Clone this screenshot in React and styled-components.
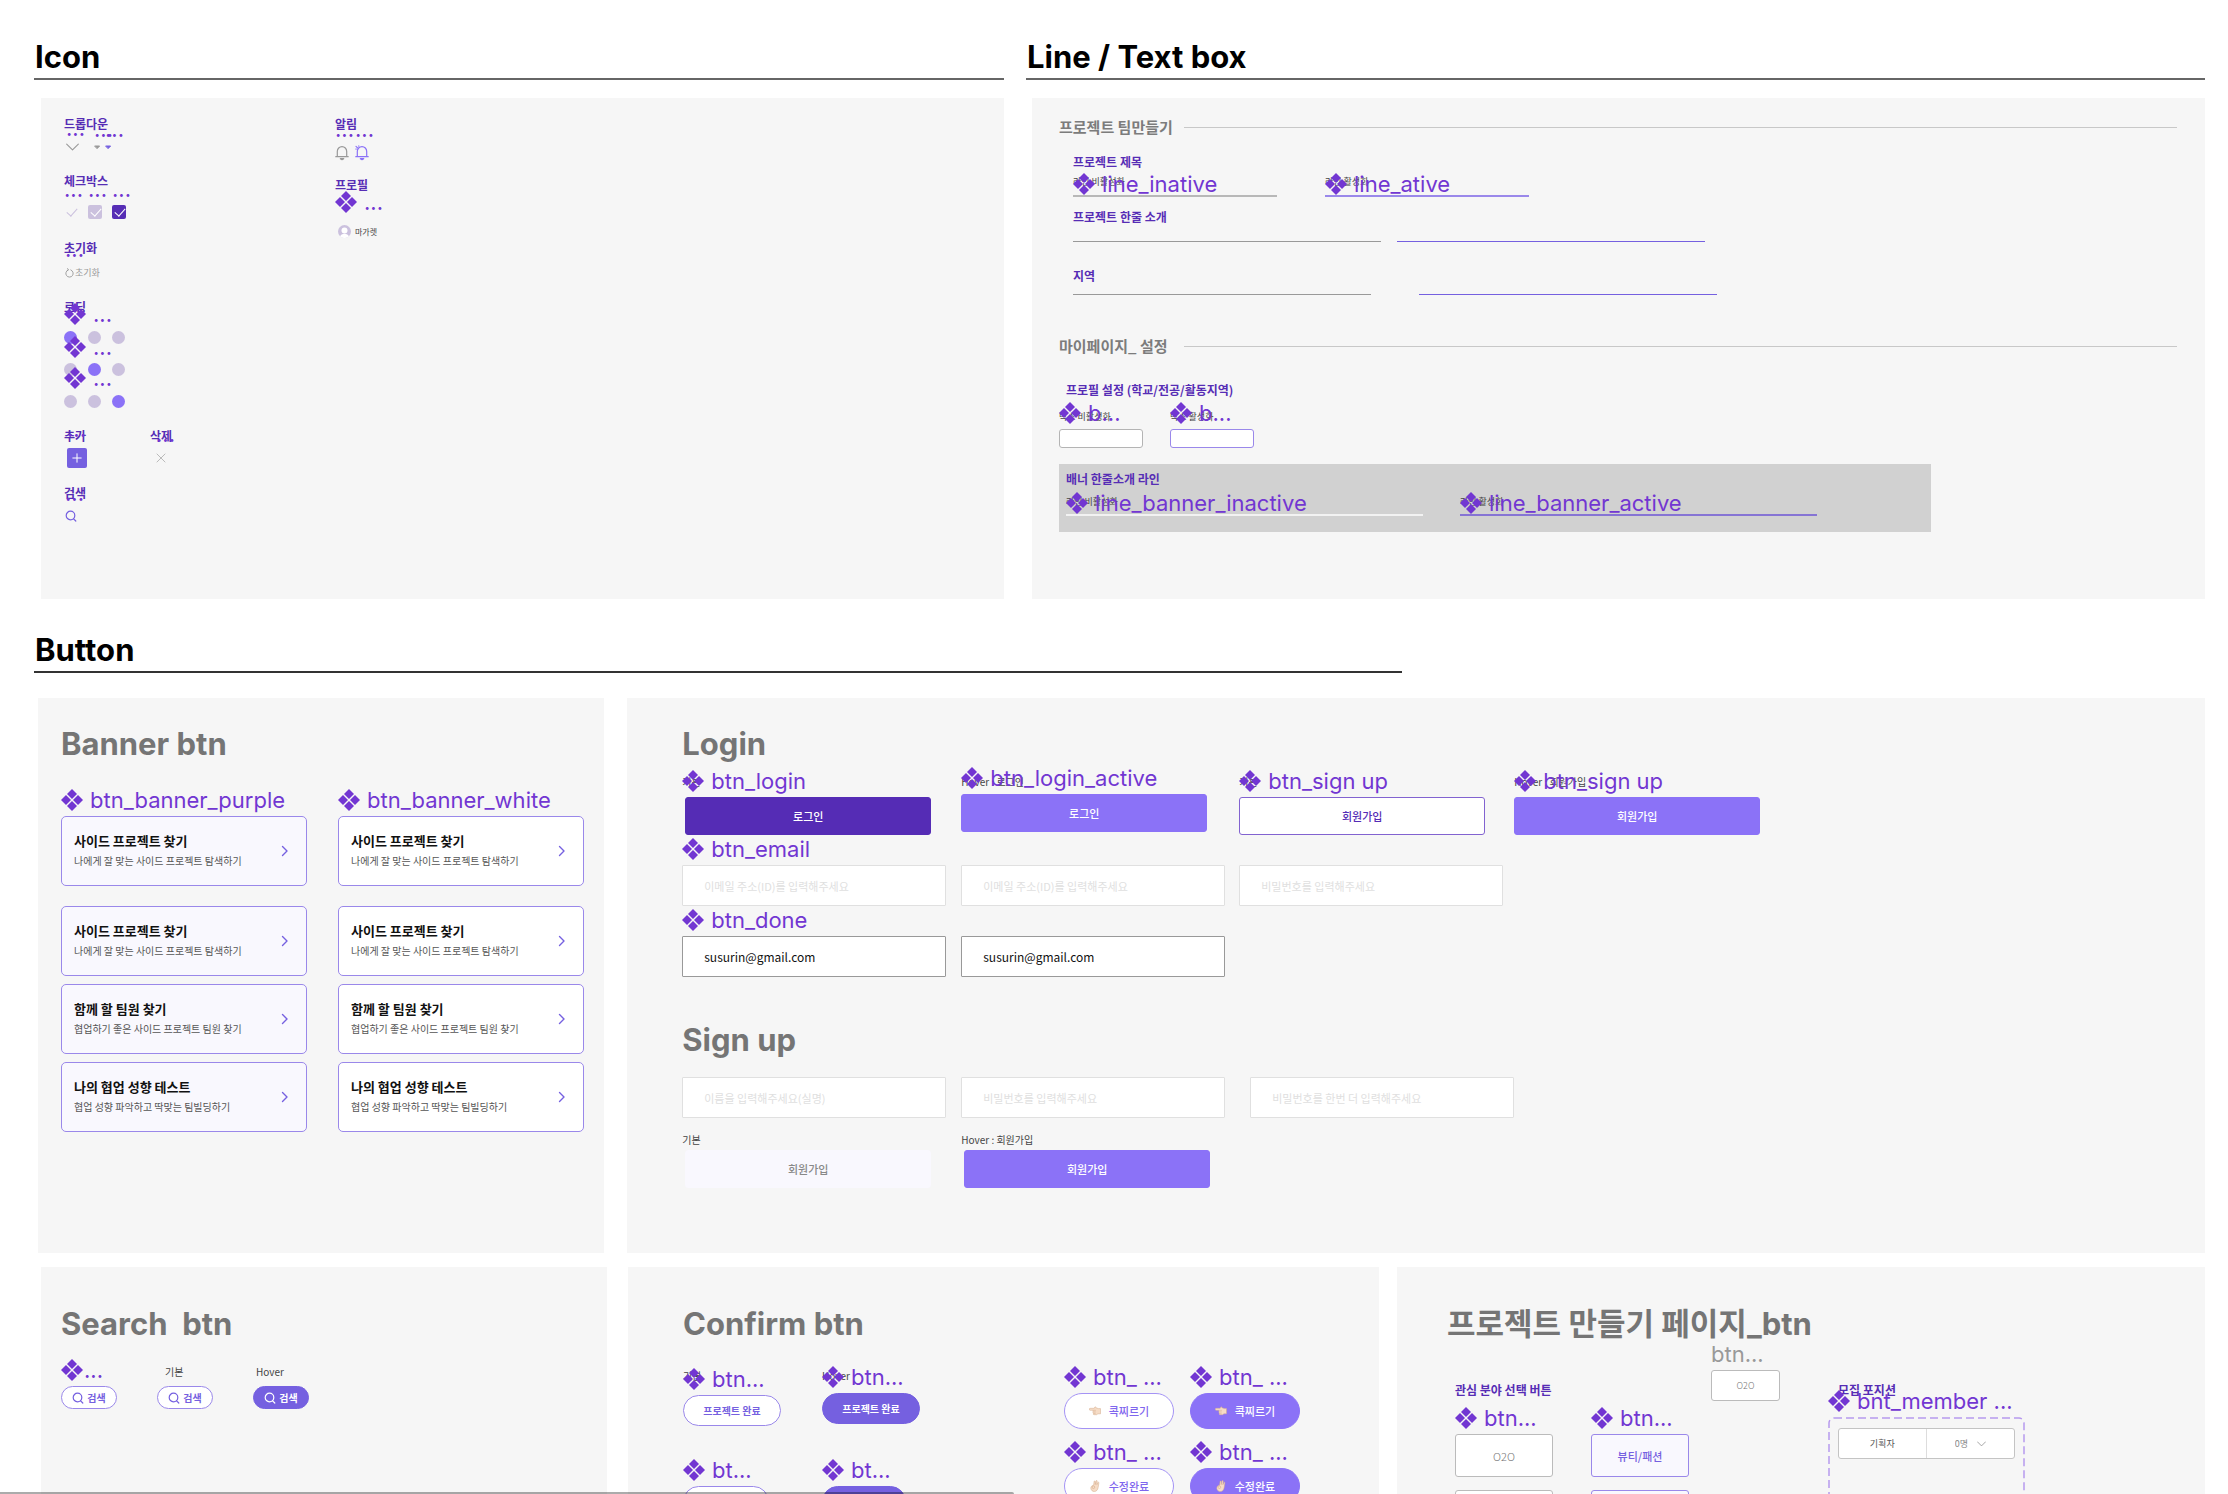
import React from "react";
import styled, { createGlobalStyle } from "styled-components";

const GlobalStyle = createGlobalStyle`
  * {
    box-sizing: border-box;
  }
  body {
    margin: 0;
    background: #fff;
    font-family: "Noto Sans CJK KR", "Noto Sans", sans-serif;
    color: #111;
  }
  button, input, select {
    font-family: inherit;
    margin: 0;
  }
  h1, h2, h3, h4, p {
    margin: 0;
  }
`;

/* ---------- page ---------- */

const Page = styled.main`
  position: relative;
  height: 100vh;
  overflow: hidden;
  padding: 37px 23px 0 34px;
`;

const TopRow = styled.div`
  display: grid;
  grid-template-columns: 970fr 1179fr;
  column-gap: 22px;
`;

const MiddleRow = styled.div`
  display: grid;
  grid-template-columns: 566fr 1577fr;
  column-gap: 23px;
  margin: 25px 0 14px 4px;
`;

const BottomRow = styled.div`
  display: grid;
  grid-template-columns: 569fr 751fr 808fr;
  column-gap: 18px;
  padding-left: 7px;
  > :first-child {
    margin-right: 3px;
  }
`;

const Heading = styled.h1`
  width: ${(p) => p.$width || "100%"};
  height: 43px;
  padding-left: 1px;
  border-bottom: 2px solid ${(p) => p.$line || "#666"};
  font-family: Inter, "Noto Sans CJK KR", sans-serif;
  font-size: 31px;
  font-weight: 700;
  line-height: 40px;
  color: #000;
`;

const Panel = styled.section`
  height: ${(p) => p.$height};
  padding: ${(p) => p.$pad};
  background: #f6f6f6;
`;

const TopPanel = styled(Panel)`
  margin: 18px 0 0 ${(p) => p.$inset}px;
`;

const Title = styled.h2`
  font-family: Inter, "Noto Sans CJK KR", sans-serif;
  font-size: 31px;
  font-weight: 700;
  line-height: 40px;
  white-space: pre;
  color: #757575;
`;

const Label = styled.h4`
  font-size: 12px;
  font-weight: 700;
  line-height: 18px;
  white-space: nowrap;
  color: #562db5;
`;

const Caption = styled.p`
  font-size: ${(p) => (p.$small ? "9px" : "10px")};
  line-height: ${(p) => (p.$small ? "14px" : "16px")};
  font-weight: 400;
  white-space: nowrap;
  color: #444;
`;

const ScrollThumb = styled.div`
  position: absolute;
  left: 0;
  bottom: 0;
  width: 1014px;
  height: 2px;
  background: rgba(0, 0, 0, 0.33);
  border-radius: 0 2px 0 0;
`;

/* ---------- component tags ---------- */

const Node = styled.div`
  position: relative;
  width: fit-content;
`;

const TagBox = styled.span`
  position: absolute;
  left: 0;
  bottom: calc(100% + ${(p) => p.$gap}px);
  display: flex;
  align-items: center;
  gap: ${(p) => (p.$tight ? "1px" : "7px")};
  font-family: Inter, sans-serif;
  font-size: 22px;
  line-height: 26px;
  white-space: nowrap;
  color: ${(p) => (p.$muted ? "#999" : "#7236d2")};
  svg {
    flex: none;
  }
`;

function Diamonds() {
  const r = 5;
  const spots = [[11, 5], [5, 11], [17, 11], [11, 17]];
  return (
    <svg width="22" height="22" viewBox="0 0 22 22" fill="currentColor" aria-hidden="true">
      {spots.map(([x, y]) => (
        <path key={x + "-" + y} d={`M${x} ${y - r}l${r} ${r}l-${r} ${r}l-${r} -${r}z`} />
      ))}
    </svg>
  );
}

function Tagged({ tag, gap = 3, plain, tight, muted, children }) {
  return (
    <Node>
      {children}
      <TagBox $gap={gap} $tight={tight} $muted={muted}>
        {!plain && <Diamonds />}
        <span>{tag}</span>
      </TagBox>
    </Node>
  );
}

/* ---------- small drawings ---------- */

const Icon = styled.svg`
  display: block;
  fill: none;
  stroke: currentColor;
  stroke-linecap: round;
  stroke-linejoin: round;
  color: ${(p) => p.$color || "inherit"};
`;

const Chevron = ({ size = 13, color = "#999" }) => (
  <Icon width={size} height={size} viewBox="0 0 12 12" $color={color} aria-hidden="true">
    <path d="M.6 3.800l5.400 5.400l5.400 -5.400" />
  </Icon>
);

const ChevronRight = () => (
  <Icon width="8" height="12" viewBox="0 0 8 12" $color="#7560e0" strokeWidth="1.4" aria-hidden="true">
    <path d="M1.500 1.500l4.500 4.500l-4.500 4.500" />
  </Icon>
);

const Triangle = ({ color }) => (
  <Icon width="7" height="12" viewBox="0 0 7 12" $color={color} aria-hidden="true">
    <path d="M1 5h4.600l-2.300 2.400z" fill="currentColor" />
  </Icon>
);

const Search = ({ color }) => (
  <Icon width="12" height="12" viewBox="0 0 12 12" $color={color} strokeWidth="1.2" aria-hidden="true">
    <circle cx="5.500" cy="5.500" r="4.300" />
    <path d="M8.600 8.800l2.200 2.200" />
  </Icon>
);

const Bell = ({ color, ring }) => (
  <Icon width="14" height="16" viewBox="0 0 14 16" $color={color} strokeWidth="1.200" aria-hidden="true">
    <path d="M2.300 11.500v-5a4.700 4.900 0 0 1 9.400 0v5M.8 11.700h12.400" />
    <path d="M5.300 13.700h3.400l-1.700 1z" fill="currentColor" />
    {ring && <path d="M1 1.300l1.600 1.600M.8 4h.6M3.800 .9v.3" />}
  </Icon>
);

const Reset = () => (
  <Icon width="9" height="10" viewBox="0 0 9 10" aria-hidden="true">
    <path d="M3.200 1.900a3.700 3.700 0 1 0 2.600 0M2.600 .6l.8 1.300l-1.300 .9" strokeWidth=".9" />
  </Icon>
);

const Cross = () => (
  <Icon width="10" height="14" viewBox="0 0 10 14" $color="#bbb" aria-hidden="true">
    <path d="M1 3l8 8M9 3l-8 8" />
  </Icon>
);

const Avatar = () => (
  <svg width="13" height="13" viewBox="0 0 13 13" aria-hidden="true">
    <circle cx="6.500" cy="6.500" r="6.500" fill="#cbc1de" />
    <circle cx="6.500" cy="5.500" r="3" fill="#fff" />
    <path d="M2.200 11.400c.6-3.400 8-3.400 8.600 0a6.500 6.500 0 0 1-8.600 0z" fill="#fff" />
  </svg>
);

const PointHand = () => (
  <svg width="12" height="10" viewBox="0 0 12 10" aria-hidden="true">
    <path
      d="M1 2.300h4.200l.6-1.200c.5-.6 1.200-.1 1 .6l2.600 .9h2.100v5.200h-2.600l-1.200 .9h-2.600c-.9 0-1-.9-.6-1.300c-.7-.3-.7-1.100-.2-1.500c-.6-.4-.6-1.200 0-1.600h-3.300c-1-.2-1-1.800 0-2z"
      fill="#f6dcc6"
      stroke="#d3ab8a"
      strokeWidth=".5"
    />
    <path d="M4.500 4.300h2.400M4.500 5.900h2.200M4.800 7.400h1.800" stroke="#d3ab8a" strokeWidth=".5" />
  </svg>
);

const OkHand = () => (
  <svg width="12" height="12" viewBox="0 0 12 12" aria-hidden="true">
    <path
      d="M4.600 5.200l.5-3.800c.2-.6 1-.6 1.100 0v3.200l.9-3.800c.2-.6 1.100-.4 1.100 .2l-.3 3.700l1-2.300c.3-.5 1-.2 1 .3l-.8 5c-.4 2-1.500 3.800-3.800 3.800c-1.800 0-3-1.200-3.400-2.600c-.5-1.700 .8-3.700 2.700-3.700z"
      fill="#f6dcc6"
      stroke="#d3ab8a"
      strokeWidth=".5"
    />
    <circle cx="4.400" cy="7.200" r="1.300" fill="none" stroke="#d3ab8a" strokeWidth=".6" />
  </svg>
);

/* ---------- icon panel ---------- */

const IconColumns = styled.div`
  display: grid;
  grid-template-columns: 271px auto;
`;

const IconStack = styled.div`
  display: grid;
  align-content: start;
  grid-template-rows: ${(p) => p.$rows};
`;

const GroupPair = styled.div`
  display: grid;
  grid-template-columns: 86px auto;
`;

const Slots = styled.div`
  display: flex;
  align-items: center;
  gap: ${(p) => p.$gap || 0}px;
  margin-top: ${(p) => p.$top}px;
  padding-left: ${(p) => p.$indent || 0}px;
`;

const CheckBox = styled.input`
  appearance: none;
  display: block;
  position: relative;
  width: 14px;
  height: 14px;
  border-radius: 2px;
  background: ${(p) => p.$fill};
  &::after {
    content: "";
    position: absolute;
    left: 3px;
    top: 3px;
    width: 9px;
    height: 5px;
    border: solid ${(p) => p.$mark};
    border-width: 0 0 1px 1px;
    transform: rotate(-48deg);
  }
`;

const Dot = styled.span`
  display: block;
  width: 13px;
  height: 13px;
  border-radius: 50%;
  background: ${(p) => (p.$on ? "#8b72f7" : "#cbc1de")};
`;

const AddButton = styled.button`
  display: grid;
  place-items: center;
  width: 20px;
  height: 20px;
  padding: 0;
  border: 0;
  border-radius: 2px;
  background: #7560e0;
  color: #fff;
`;

const BareButton = styled.button`
  display: flex;
  align-items: center;
  gap: 1px;
  height: 14px;
  padding: 0;
  border: 0;
  background: none;
  font-size: 9px;
  line-height: 14px;
  color: #999;
`;

const Profile = styled.div`
  display: flex;
  align-items: center;
  gap: 4px;
  height: 13px;
  padding-left: 3px;
  font-size: 8px;
  line-height: 12px;
  color: #444;
`;

function LoadingRow({ on, gap }) {
  return (
    <Tagged tag="..." gap={gap}>
      <Slots $top={0} $gap={11}>
        {[0, 1, 2].map((i) => (
          <Dot key={i} $on={i === on} />
        ))}
      </Slots>
    </Tagged>
  );
}

const LoadingRows = styled.div`
  display: grid;
  gap: 19px;
  margin-top: 15px;
`;

function IconPanel() {
  return (
    <TopPanel $height="501px" $pad="17px 23px 0" $inset={7}>
      <IconColumns>
        <IconStack $rows="57px 67px 59px 129px 57px auto">
          <div>
            <Label>드롭다운</Label>
            <Slots $top={7} $indent={2}>
              <Tagged tag="..." plain gap={-1}><Chevron /></Tagged>
              <Slots $top={0} $gap={4} $indent={15}>
                <Tagged tag="..." plain gap={-1}><Triangle color="#999" /></Tagged>
                <Tagged tag="..." plain gap={-1}><Triangle color="#7560e0" /></Tagged>
              </Slots>
            </Slots>
          </div>
          <div>
            <Label>체크박스</Label>
            <Slots $top={15} $gap={10}>
              <Tagged tag="..." plain><CheckBox type="checkbox" aria-label="체크 기본" $fill="transparent" $mark="#cbc1de" /></Tagged>
              <Tagged tag="..." plain><CheckBox type="checkbox" aria-label="체크 비활성화" $fill="#cbc1de" $mark="#fff" /></Tagged>
              <Tagged tag="..." plain><CheckBox type="checkbox" aria-label="체크 활성화" defaultChecked $fill="#562db5" $mark="#fff" /></Tagged>
            </Slots>
          </div>
          <div>
            <Label>초기화</Label>
            <Slots $top={9} $indent={1}>
              <Tagged tag="..." plain gap={4}>
                <BareButton type="button"><Reset />초기화</BareButton>
              </Tagged>
            </Slots>
          </div>
          <div>
            <Label>로딩</Label>
            <LoadingRows>
              <LoadingRow on={0} gap={4} />
              <LoadingRow on={1} gap={3} />
              <LoadingRow on={2} gap={4} />
            </LoadingRows>
          </div>
          <GroupPair>
            <div>
              <Label>추가</Label>
              <Slots $top={3} $indent={3}>
                <Tagged tag="..." plain gap={6}>
                  <AddButton type="button" aria-label="추가">
                    <Icon width="10" height="10" viewBox="0 0 10 10" aria-hidden="true">
                      <path d="M5 .8v8.400M.8 5h8.400" />
                    </Icon>
                  </AddButton>
                </Tagged>
              </Slots>
            </div>
            <div>
              <Label>삭제</Label>
              <Slots $top={6} $indent={6}>
                <Tagged tag="..." plain gap={4}>
                  <BareButton type="button" aria-label="삭제"><Cross /></BareButton>
                </Tagged>
              </Slots>
            </div>
          </GroupPair>
          <div>
            <Label>검색</Label>
            <Slots $top={8} $indent={1}>
              <Tagged tag="..." plain gap={4}><Search color="#7560e0" /></Tagged>
            </Slots>
          </div>
        </IconStack>
        <IconStack $rows="61px auto">
          <div>
            <Label>알림</Label>
            <Slots $top={12} $gap={6}>
              <Tagged tag="..." plain><Bell color="#999" /></Tagged>
              <Tagged tag="..." plain><Bell color="#8b72f7" ring /></Tagged>
            </Slots>
          </div>
          <div>
            <Label>프로필</Label>
            <Slots $top={31}>
              <Tagged tag="..." gap={10}>
                <Profile><Avatar />마가렛</Profile>
              </Tagged>
            </Slots>
          </div>
        </IconStack>
      </IconColumns>
    </TopPanel>
  );
}

/* ---------- line panel ---------- */

const SectionHead = styled.h3`
  display: grid;
  grid-template-columns: 125px 1fr;
  align-items: center;
  margin-top: ${(p) => p.$top || 0}px;
  font-size: 15px;
  font-weight: 700;
  line-height: 20px;
  white-space: nowrap;
  color: #7c7c7c;
  &::after {
    content: "";
    height: 1px;
    background: #c8c8c8;
  }
`;

const Block = styled.div`
  margin-top: ${(p) => p.$top}px;
  padding-left: ${(p) => p.$indent || 0}px;
`;

const LineRow = styled.div`
  display: flex;
  gap: ${(p) => p.$gap}px;
  margin-top: ${(p) => p.$top || 0}px;
`;

const LineInput = styled.input`
  display: block;
  width: ${(p) => p.$width}px;
  height: ${(p) => p.$height}px;
  padding: 0;
  border: 0;
  border-bottom: ${(p) => p.$weight || 1}px solid ${(p) => p.$color};
  background: none;
  outline: none;
`;

const SmallBox = styled.input`
  display: block;
  width: 84px;
  height: 19px;
  margin-top: 5px;
  border: 1px solid ${(p) => p.$color};
  border-radius: 3px;
  background: #fff;
`;

const BannerStrip = styled.div`
  width: 78%;
  min-width: 780px;
  height: 68px;
  margin-top: 16px;
  padding: 6px 7px;
  background: #d1d1d1;
`;

function LinePanel() {
  return (
    <TopPanel $height="501px" $pad="19px 28px 0 27px" $inset={6}>
      <SectionHead>프로젝트 팀만들기</SectionHead>
      <Block $top={16} $indent={14}>
        <Label>프로젝트 제목</Label>
        <LineRow $gap={48} $top={4}>
          <Tagged tag="line_inative" gap={-22}>
            <Caption $small>라인 비활성화</Caption>
            <LineInput aria-label="프로젝트 제목" $width={204} $height={8} $weight={2} $color="#b8b8b8" />
          </Tagged>
          <Tagged tag="line_ative" gap={-22}>
            <Caption $small>라인 활성화</Caption>
            <LineInput aria-label="프로젝트 제목 활성화" $width={204} $height={8} $weight={2} $color="#9a88ea" />
          </Tagged>
        </LineRow>
      </Block>
      <Block $top={11} $indent={14}>
        <Label>프로젝트 한줄 소개</Label>
        <LineRow $gap={16}>
          <LineInput aria-label="프로젝트 한줄 소개" $width={308} $height={16} $color="#999" />
          <LineInput aria-label="프로젝트 한줄 소개 활성화" $width={308} $height={16} $color="#7560e0" />
        </LineRow>
      </Block>
      <Block $top={25} $indent={14}>
        <Label>지역</Label>
        <LineRow $gap={48}>
          <LineInput aria-label="지역" $width={298} $height={10} $color="#999" />
          <LineInput aria-label="지역 활성화" $width={298} $height={10} $color="#7560e0" />
        </LineRow>
      </Block>
      <SectionHead $top={41}>마이페이지_ 설정</SectionHead>
      <Block $top={25} $indent={7}>
        <Label>프로필 설정 (학교/전공/활동지역)</Label>
      </Block>
      <LineRow $gap={27} $top={11}>
        <Tagged tag="b..." gap={-16}>
          <Caption $small>박스 비활성화</Caption>
          <SmallBox aria-label="프로필 설정" $color="#b4b4b4" />
        </Tagged>
        <Tagged tag="b..." gap={-16}>
          <Caption $small>박스 활성화</Caption>
          <SmallBox aria-label="프로필 설정 활성화" $color="#9a88ea" />
        </Tagged>
      </LineRow>
      <BannerStrip>
        <Label>배너 한줄소개 라인</Label>
        <LineRow $gap={37} $top={7}>
          <Tagged tag="line_banner_inactive" gap={-21}>
            <Caption $small>라인 비활성화</Caption>
            <LineInput aria-label="배너 한줄소개" $width={357} $height={7} $weight={2} $color="#f2f2f2" />
          </Tagged>
          <Tagged tag="line_banner_active" gap={-21}>
            <Caption $small>라인 활성화</Caption>
            <LineInput aria-label="배너 한줄소개 활성화" $width={357} $height={7} $weight={2} $color="#8674d4" />
          </Tagged>
        </LineRow>
      </BannerStrip>
    </TopPanel>
  );
}

/* ---------- banner buttons ---------- */

const BannerColumns = styled.div`
  display: flex;
  gap: 31px;
  margin-top: 52px;
`;

const BannerList = styled.div`
  display: grid;
  align-content: start;
  gap: 8px;
  > :first-child {
    margin-bottom: 12px;
  }
`;

const BannerButton = styled.button`
  display: flex;
  align-items: center;
  justify-content: space-between;
  width: 246px;
  height: 70px;
  padding: 0 17px 0 12px;
  border: 1px solid #9a88ea;
  border-radius: 5px;
  background: ${(p) => (p.$white ? "#fff" : "#f9f8fe")};
  text-align: left;
  strong {
    display: block;
    font-size: 13px;
    line-height: 20px;
    color: #111;
  }
  small {
    display: block;
    font-size: 10px;
    line-height: 20px;
    color: #555;
  }
`;

const banners = [
  ["사이드 프로젝트 찾기", "나에게 잘 맞는 사이드 프로젝트 탐색하기"],
  ["사이드 프로젝트 찾기", "나에게 잘 맞는 사이드 프로젝트 탐색하기"],
  ["함께 할 팀원 찾기", "협업하기 좋은 사이드 프로젝트 팀원 찾기"],
  ["나의 협업 성향 테스트", "협업 성향 파악하고 딱맞는 팀빌딩하기"],
];

function BannerCards({ tag, white }) {
  return (
    <BannerList>
      {banners.map(([title, text], i) => {
        const card = (
          <BannerButton type="button" key={i} $white={white}>
            <span>
              <strong>{title}</strong>
              <small>{text}</small>
            </span>
            <ChevronRight />
          </BannerButton>
        );
        return i === 0 ? <Tagged key={i} tag={tag}>{card}</Tagged> : card;
      })}
    </BannerList>
  );
}

/* ---------- login / sign up ---------- */

const FormRow = styled.div`
  display: grid;
  grid-template-columns: ${(p) => p.$cols || "279px 278px 275px auto"};
  margin-top: ${(p) => p.$top}px;
`;

const WideButton = styled.button`
  display: block;
  width: 246px;
  height: 38px;
  margin: ${(p) => p.$top || 0}px 0 0 ${(p) => p.$left || 0}px;
  padding: 0;
  border: 1px solid ${(p) => p.$line || p.$fill};
  border-radius: 3px;
  background: ${(p) => p.$fill};
  font-size: 11px;
  font-weight: 500;
  color: ${(p) => p.$color || "#fff"};
`;

const Field = styled.input`
  display: block;
  width: 264px;
  height: 41px;
  padding: 0 21px;
  border: 1px solid ${(p) => (p.$done ? "#999" : "#e0e0e0")};
  border-radius: 1px;
  background: #fff;
  font-size: ${(p) => (p.$done ? "12px" : "11px")};
  font-weight: 400;
  color: #111;
  &::placeholder {
    color: #e0e0e0;
    opacity: 1;
  }
`;

function LoginPanel() {
  return (
    <Panel $height="555px" $pad="26px 55px 0">
      <Title>Login</Title>
      <FormRow $top={10}>
        <Tagged tag="btn_login" gap={-20}>
          <Caption>기본</Caption>
          <WideButton type="button" $top={7} $left={3} $fill="#552cb5">로그인</WideButton>
        </Tagged>
        <Tagged tag="btn_login_active" gap={-17}>
          <Caption>Hover : 로그인</Caption>
          <WideButton type="button" $top={4} $fill="#8b72f7">로그인</WideButton>
        </Tagged>
        <Tagged tag="btn_sign up" gap={-20}>
          <Caption>기본</Caption>
          <WideButton type="button" $top={7} $fill="#fff" $line="#8263d0" $color="#552cb5">회원가입</WideButton>
        </Tagged>
        <Tagged tag="btn_sign up" gap={-20}>
          <Caption>Hover : 회원가입</Caption>
          <WideButton type="button" $top={7} $fill="#8b72f7">회원가입</WideButton>
        </Tagged>
      </FormRow>
      <FormRow $top={30}>
        <Tagged tag="btn_email">
          <Field aria-label="이메일" placeholder="이메일 주소(ID)를 입력해주세요" />
        </Tagged>
        <Field aria-label="이메일" placeholder="이메일 주소(ID)를 입력해주세요" />
        <Field aria-label="비밀번호" placeholder="비밀번호를 입력해주세요" />
      </FormRow>
      <FormRow $top={30}>
        <Tagged tag="btn_done">
          <Field aria-label="이메일" $done defaultValue="susurin@gmail.com" />
        </Tagged>
        <Field aria-label="이메일" $done defaultValue="susurin@gmail.com" />
      </FormRow>
      <Block $top={43}>
        <Title>Sign up</Title>
      </Block>
      <FormRow $top={17} $cols="279px 289px auto">
        <Field aria-label="이름" placeholder="이름을 입력해주세요(실명)" />
        <Field aria-label="비밀번호" placeholder="비밀번호를 입력해주세요" />
        <Field aria-label="비밀번호 확인" placeholder="비밀번호를 한번 더 입력해주세요" />
      </FormRow>
      <FormRow $top={14}>
        <div>
          <Caption>기본</Caption>
          <WideButton type="button" $top={2} $left={3} $fill="#f9f8fe" $color="#888">회원가입</WideButton>
        </div>
        <div>
          <Caption>Hover : 회원가입</Caption>
          <WideButton type="button" $top={2} $left={3} $fill="#8b72f7">회원가입</WideButton>
        </div>
      </FormRow>
    </Panel>
  );
}

/* ---------- search / confirm ---------- */

const Pill = styled.button`
  display: flex;
  align-items: center;
  justify-content: center;
  gap: ${(p) => p.$gap || 3}px;
  width: ${(p) => p.$w}px;
  height: ${(p) => p.$h}px;
  margin-top: ${(p) => p.$top || 0}px;
  padding: 0;
  border: 1px solid ${(p) => p.$line || "#9a88ea"};
  border-radius: 18px;
  background: ${(p) => p.$fill || "#fff"};
  font-size: ${(p) => p.$size || 10}px;
  font-weight: ${(p) => p.$weight || 700};
  line-height: 16px;
  color: ${(p) => p.$color || "#7560e0"};
`;

const SearchRow = styled.div`
  display: flex;
  gap: 40px;
  margin-top: 20px;
`;

const CaptionPad = styled.div`
  padding-left: ${(p) => p.$left}px;
`;

function SearchPanel() {
  return (
    <Panel $height="300px" $pad="37px 20px 0">
      <Title>Search  btn</Title>
      <SearchRow>
        <Tagged tag="..." tight gap={-19}>
          <Pill type="button" $w={56} $h={23} $top={22}><Search />검색</Pill>
        </Tagged>
        <div>
          <CaptionPad $left={8}><Caption>기본</Caption></CaptionPad>
          <Pill type="button" $w={56} $h={23} $top={6}><Search />검색</Pill>
        </div>
        <div>
          <CaptionPad $left={3}><Caption>Hover</Caption></CaptionPad>
          <Pill type="button" $w={56} $h={23} $top={6} $fill="#7560e0" $line="#7560e0" $color="#fff"><Search />검색</Pill>
        </div>
      </SearchRow>
    </Panel>
  );
}

const ConfirmGrid = styled.div`
  display: grid;
  grid-template-columns: 139px 242px 126px auto;
  margin-top: 24px;
`;

const Cell = styled.div`
  display: grid;
  align-content: start;
  gap: ${(p) => p.$gap}px;
`;

function ConfirmPanel() {
  const poke = { $w: 110, $h: 36, $gap: 8, $size: 11, $weight: 500 };
  return (
    <Panel $height="300px" $pad="37px 55px 0">
      <Title>Confirm btn</Title>
      <ConfirmGrid>
        <Cell $gap={60}>
          <Tagged tag="btn..." gap={-24}>
            <Caption>기본</Caption>
            <Pill type="button" $w={98} $h={31} $top={11}>프로젝트 완료</Pill>
          </Tagged>
          <Tagged tag="bt...">
            <Pill type="button" aria-label="완료" $w={86} $h={31} />
          </Tagged>
        </Cell>
        <Cell $gap={62}>
          <Tagged tag="btn..." gap={-22}>
            <Caption>Hover</Caption>
            <Pill type="button" $w={98} $h={31} $top={9} $fill="#7560e0" $line="#7560e0" $color="#fff">프로젝트 완료</Pill>
          </Tagged>
          <Tagged tag="bt...">
            <Pill type="button" aria-label="완료" $w={84} $h={31} $fill="#7560e0" $line="#7560e0" />
          </Tagged>
        </Cell>
        <Cell $gap={39}>
          <Tagged tag="btn_ ..." gap={-22}>
            <Pill type="button" {...poke} $top={25} $line="#a493f5" $color="#7f66ee"><PointHand />콕찌르기</Pill>
          </Tagged>
          <Tagged tag="btn_ ...">
            <Pill type="button" {...poke} $line="#a493f5" $color="#7f66ee"><OkHand />수정완료</Pill>
          </Tagged>
        </Cell>
        <Cell $gap={39}>
          <Tagged tag="btn_ ..." gap={-22}>
            <Pill type="button" {...poke} $top={25} $fill="#8b72f7" $line="#8b72f7" $color="#fff"><PointHand />콕찌르기</Pill>
          </Tagged>
          <Tagged tag="btn_ ...">
            <Pill type="button" {...poke} $fill="#8b72f7" $line="#8b72f7" $color="#fff"><OkHand />수정완료</Pill>
          </Tagged>
        </Cell>
      </ConfirmGrid>
    </Panel>
  );
}

/* ---------- project page buttons ---------- */

const ProjectColumns = styled.div`
  display: grid;
  grid-template-columns: 256px 117px auto;
  align-items: start;
  padding-left: 8px;
`;

const OptionGrid = styled.div`
  display: grid;
  grid-template-columns: 136px auto;
  row-gap: 13px;
  margin-top: 35px;
`;

const Option = styled.button`
  display: block;
  width: ${(p) => (p.$small ? "69px" : "98px")};
  height: ${(p) => (p.$small ? "31px" : "43px")};
  padding: 0;
  border: 1px solid ${(p) => (p.$on ? "#9a88ea" : "#bbb")};
  border-radius: 3px;
  background: ${(p) => (p.$on ? "#f9f8fe" : "#fff")};
  font-size: ${(p) => (p.$small ? "9px" : "11px")};
  font-weight: ${(p) => (p.$on ? 500 : 300)};
  color: ${(p) => (p.$on ? "#7560e0" : "#757575")};
`;

const MemberFrame = styled.div`
  width: 197px;
  height: 160px;
  margin-top: 18px;
  padding: 11px 10px;
`;

const DashedOutline = styled.svg`
  position: absolute;
  left: 0;
  bottom: 0;
  fill: none;
  stroke: #b79aee;
`;

const MemberRow = styled.div`
  display: grid;
  grid-template-columns: 1fr 1fr;
  height: 31px;
  border: 1px solid #c4c4c4;
  border-radius: 3px;
  background: #fff;
  font-size: 9px;
  line-height: 29px;
  color: #555;
`;

const Role = styled.label`
  border-right: 1px solid #ddd;
  text-align: center;
`;

const Count = styled.div`
  display: flex;
  align-items: center;
  justify-content: center;
  gap: 7px;
  select {
    appearance: none;
    width: 15px;
    padding: 0;
    border: 0;
    background: none;
    font-size: 9px;
    color: #888;
  }
`;

function ProjectPanel() {
  return (
    <Panel $height="300px" $pad="37px 20px 0 50px">
      <Title>프로젝트 만들기 페이지_btn</Title>
      <ProjectColumns>
        <Block $top={37}>
          <Label>관심 분야 선택 버튼</Label>
          <OptionGrid>
            <Tagged tag="btn..."><Option type="button">O2O</Option></Tagged>
            <Tagged tag="btn..."><Option type="button" $on>뷰티/패션</Option></Tagged>
            <Option type="button" aria-label="분야" />
            <Option type="button" aria-label="선택한 분야" $on />
          </OptionGrid>
        </Block>
        <Block $top={26}>
          <Tagged tag="btn..." plain muted><Option type="button" $small>O2O</Option></Tagged>
        </Block>
        <Block $top={37}>
          <CaptionPad $left={10}><Label>모집 포지션</Label></CaptionPad>
          <Tagged tag="bnt_member ...">
            <MemberFrame>
              <DashedOutline width="197" height="160" aria-hidden="true">
                <rect x="1" y="1" width="195" height="158" rx="5" strokeWidth="1.500" strokeDasharray="8 4" />
              </DashedOutline>
              <MemberRow>
                <Role htmlFor="planner">기획자</Role>
                <Count>
                  <select id="planner" defaultValue="0">
                    <option value="0">0명</option>
                    <option value="1">1명</option>
                  </select>
                  <Chevron size={9} color="#888" />
                </Count>
              </MemberRow>
            </MemberFrame>
          </Tagged>
        </Block>
      </ProjectColumns>
    </Panel>
  );
}

export default function App() {
  return (
    <>
      <GlobalStyle />
      <Page>
        <TopRow>
          <div>
            <Heading>Icon</Heading>
            <IconPanel />
          </div>
          <div>
            <Heading>Line / Text box</Heading>
            <LinePanel />
          </div>
        </TopRow>
        <Block $top={31}>
          <Heading $width="63%" $line="#333">Button</Heading>
        </Block>
        <MiddleRow>
          <Panel $height="555px" $pad="26px 15px 0 23px">
            <Title>Banner btn</Title>
            <BannerColumns>
              <BannerCards tag="btn_banner_purple" />
              <BannerCards tag="btn_banner_white" white />
            </BannerColumns>
          </Panel>
          <LoginPanel />
        </MiddleRow>
        <BottomRow>
          <SearchPanel />
          <ConfirmPanel />
          <ProjectPanel />
        </BottomRow>
        <ScrollThumb />
      </Page>
    </>
  );
}
